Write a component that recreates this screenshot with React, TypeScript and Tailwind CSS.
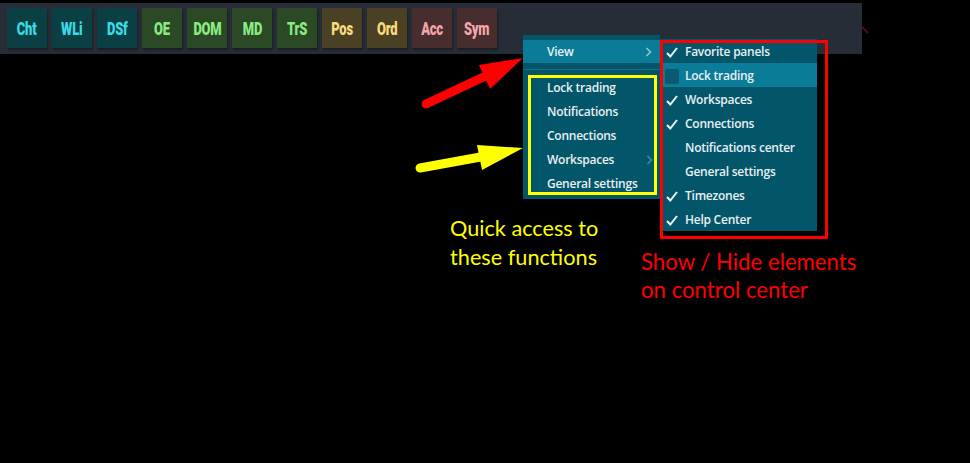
import React from "react"

const tiles = [
  { label: "Cht", cls: "bg-[#0a3f43] text-[#38dce4]" },
  { label: "WLi", cls: "bg-[#0a3f43] text-[#38dce4]" },
  { label: "DSf", cls: "bg-[#0a3f43] text-[#38dce4]" },
  { label: "OE", cls: "bg-[#2b4925] text-[#8aec80]" },
  { label: "DOM", cls: "bg-[#2b4925] text-[#8aec80]" },
  { label: "MD", cls: "bg-[#2b4925] text-[#8aec80]" },
  { label: "TrS", cls: "bg-[#2b4925] text-[#8aec80]" },
  { label: "Pos", cls: "bg-[#4a4125] text-[#fbdc7a]" },
  { label: "Ord", cls: "bg-[#4a4125] text-[#fbdc7a]" },
  { label: "Acc", cls: "bg-[#482d2f] text-[#f5a6a8]" },
  { label: "Sym", cls: "bg-[#482d2f] text-[#f5a6a8]" },
]

const quick = ["Lock trading", "Notifications", "Connections", "Workspaces", "General settings"]

const viewItems = [
  { label: "Favorite panels", state: "check" },
  { label: "Lock trading", state: "box" },
  { label: "Workspaces", state: "check" },
  { label: "Connections", state: "check" },
  { label: "Notifications center", state: "none" },
  { label: "General settings", state: "none" },
  { label: "Timezones", state: "check" },
  { label: "Help Center", state: "check" },
]

function Chevron({ className }: { className?: string }) {
  return (
    <svg className={className} width="7" height="10" viewBox="0 0 7 10" fill="none">
      <path d="M1.5 1l4 4-4 4" stroke="currentColor" strokeWidth="1.6" />
    </svg>
  )
}

function Check() {
  return (
    <svg width="12" height="11" viewBox="0 0 12 11" fill="none">
      <path d="M1 6l3.3 3.5L11 1" stroke="#eef4f6" strokeWidth="2" />
    </svg>
  )
}

export default function App() {
  const menuFont = { fontFamily: '"Open Sans", "Noto Sans", sans-serif' }
  return (
    <div className="relative w-[970px] h-[463px] bg-black overflow-hidden">
      {/* toolbar */}
      <div className="mt-[3px] w-[862px] h-[51px] bg-[#262d36] flex items-start gap-[5px] pl-[7px] pt-[5px]">
        {tiles.map((t) => (
          <div
            key={t.label}
            className={`w-[40px] h-[40px] flex items-center justify-center font-black text-[18px] shadow-[1px_2px_2px_rgba(0,0,0,0.35)] ${t.cls}`}
            style={{ fontFamily: 'Roboto, "Liberation Sans", sans-serif' }}
          >
            <span className="inline-block scale-x-[0.72] tracking-[-0.3px]">{t.label}</span>
          </div>
        ))}
      </div>

      {/* left menu */}
      <div
        className="absolute left-[523px] top-[35px] w-[137px] h-[164px] bg-[#03566a] text-[#e9f0f2] text-[12px] font-semibold tracking-[-0.25px] flex flex-col"
        style={menuFont}
      >
        <div className="mt-[5px] h-[23px] bg-[#0a7c98] flex items-center pl-[24px] pr-[8px] pt-px">
          <span className="flex-1">View</span>
          <Chevron className="text-[#8ec4d2]" />
        </div>
        <div className="h-[12px] flex items-center">
          <div className="w-full h-px bg-[#1f6a7e]" />
        </div>
        <div className="ml-[5px] w-[129px] outline-3 outline-[#ffff00] -outline-offset-3">
          {quick.map((q) => (
            <div key={q} className="h-[24px] flex items-center pl-[19px] pr-[4px] pt-[2px]">
              <span className="flex-1">{q}</span>
              {q === "Workspaces" && <Chevron className="text-[#2a93b4]" />}
            </div>
          ))}
        </div>
      </div>

      {/* view submenu */}
      <div
        className="absolute left-[660px] top-[39px] w-[157px] bg-[#03566a] text-[#e9f0f2] text-[12px] font-semibold tracking-[-0.25px]"
        style={menuFont}
      >
        {viewItems.map((v) => (
          <div
            key={v.label}
            className={`h-[24px] flex items-center gap-[6px] pl-[5px] pt-[2px] ${v.state === "box" ? "bg-[#0a7c98]" : ""}`}
          >
            <span className="w-[14px] h-[14px] flex items-center justify-center">
              {v.state === "check" && <Check />}
              {v.state === "box" && <span className="w-[14px] h-[15px] rounded-[2px] bg-[#0a5a70]" />}
            </span>
            <span>{v.label}</span>
          </div>
        ))}
      </div>
      <div className="absolute left-[660px] top-[40px] w-[168px] h-[199px] border-[3px] border-[#ff0000]" />

      {/* annotations */}
      <svg className="absolute left-0 top-0" width="970" height="463">
        <line x1="426" y1="104" x2="492" y2="73" stroke="#ff0000" strokeWidth="9" strokeLinecap="round" />
        <polygon points="479,65 523,58 490,89" fill="#ff0000" />
        <line x1="420" y1="168" x2="486" y2="156" stroke="#ffff00" strokeWidth="9" strokeLinecap="round" />
        <polygon points="477,145 523,148 482,170" fill="#ffff00" />
        <line x1="862" y1="27" x2="868" y2="33" stroke="#7a1010" strokeWidth="2" opacity="0.7" />
      </svg>

      <div
        className="absolute left-[450px] top-[214px] text-[#ffff00] text-[21.7px] leading-[29px]"
        style={{ fontFamily: "Lato, sans-serif" }}
      >
        <div>Quick access to</div>
        <div>these functions</div>
      </div>
      <div
        className="absolute left-[641px] top-[248px] text-[#ff0000] text-[22.2px] leading-[28px]"
        style={{ fontFamily: "Lato, sans-serif" }}
      >
        <div>Show / Hide elements</div>
        <div>on control center</div>
      </div>
    </div>
  )
}
